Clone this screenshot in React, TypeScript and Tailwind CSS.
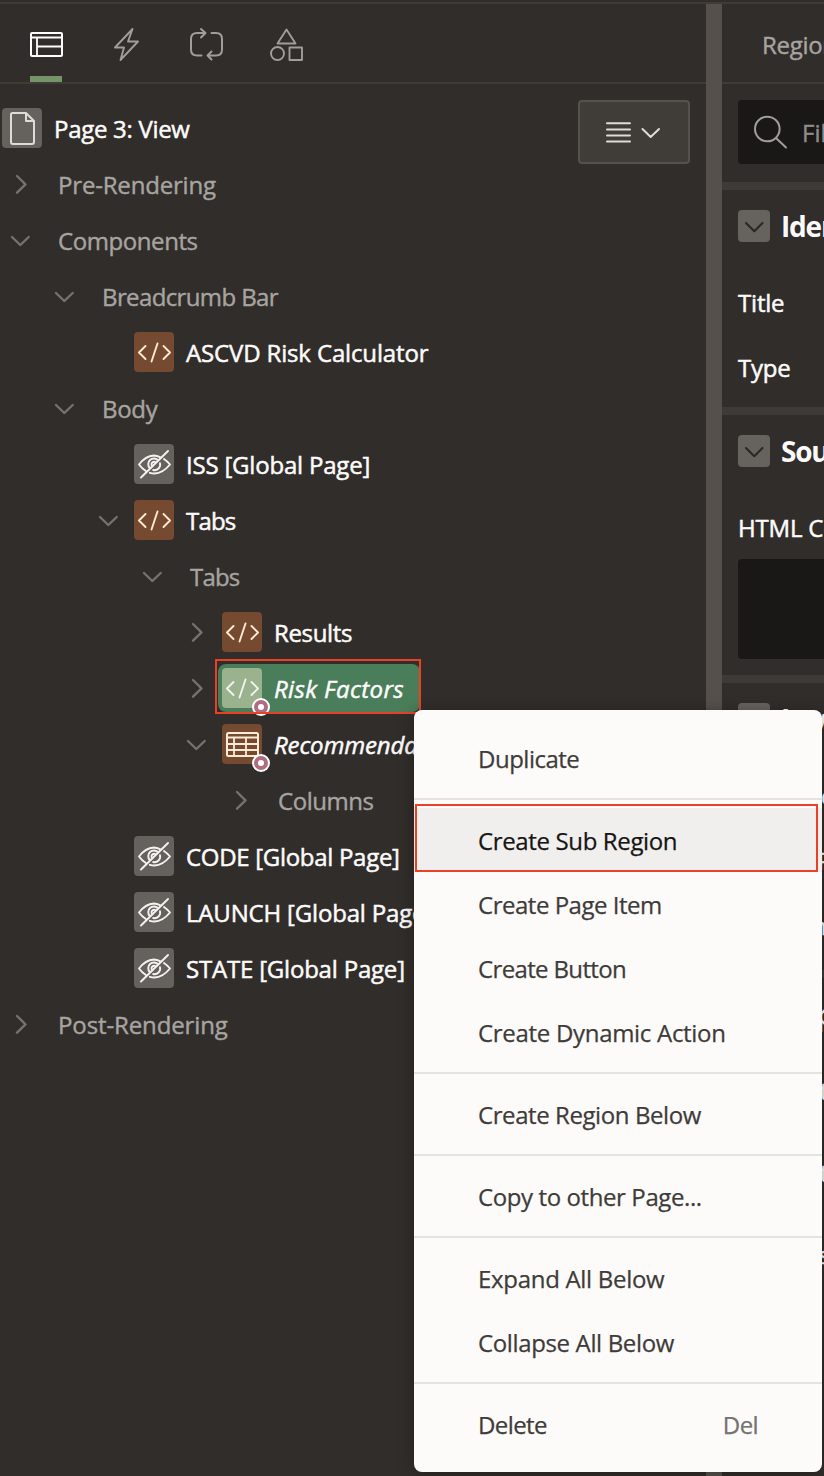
import React from "react";

type IconKind = "page" | "code" | "codeSel" | "hidden" | "table";

interface Node {
  label: string;
  pad: string;
  open?: boolean;
  icon?: IconKind;
  italic?: boolean;
  selected?: boolean;
  tracking: string;
}

const nodes: Node[] = [
  { label: "Pre-Rendering", pad: "pl-0", open: false, tracking: "tracking-[-0.18px]" },
  { label: "Components", pad: "pl-0", open: true, tracking: "tracking-[-0.42px]" },
  { label: "Breadcrumb Bar", pad: "pl-[44px]", open: true, tracking: "tracking-[-0.62px]" },
  { label: "ASCVD Risk Calculator", pad: "pl-[88px]", icon: "code", tracking: "tracking-[-0.15px]" },
  { label: "Body", pad: "pl-[44px]", open: true, tracking: "tracking-[-0.3px]" },
  { label: "ISS [Global Page]", pad: "pl-[88px]", icon: "hidden", tracking: "tracking-[-0.2px]" },
  { label: "Tabs", pad: "pl-[88px]", open: true, icon: "code", tracking: "tracking-[-0.8px]" },
  { label: "Tabs", pad: "pl-[132px]", open: true, tracking: "tracking-[-0.8px]" },
  { label: "Results", pad: "pl-[176px]", open: false, icon: "code", tracking: "tracking-[-0.35px]" },
  { label: "Risk Factors", pad: "pl-[176px]", open: false, icon: "codeSel", italic: true, selected: true, tracking: "tracking-[0.4px]" },
  { label: "Recommendations", pad: "pl-[176px]", open: true, icon: "table", italic: true, tracking: "tracking-[-0.15px]" },
  { label: "Columns", pad: "pl-[220px]", open: false, tracking: "tracking-[-0.45px]" },
  { label: "CODE [Global Page]", pad: "pl-[88px]", icon: "hidden", tracking: "tracking-[-0.3px]" },
  { label: "LAUNCH [Global Page]", pad: "pl-[88px]", icon: "hidden", tracking: "tracking-[-0.18px]" },
  { label: "STATE [Global Page]", pad: "pl-[88px]", icon: "hidden", tracking: "tracking-[-0.2px]" },
  { label: "Post-Rendering", pad: "pl-0", open: false, tracking: "tracking-[-0.12px]" },
];

function NodeIcon({ kind }: { kind: IconKind }) {
  const bg =
    kind === "code" || kind === "table" ? "bg-[#754a30]" : kind === "codeSel" ? "bg-[#9ab28d]" : "bg-[#65615d]";
  const color = kind === "code" || kind === "table" ? "text-[#fcecd4]" : "text-[#f4f2f0]";
  return (
    <div className={`relative size-10 shrink-0 rounded-[4px] ${bg} ${color}`}>
      <svg viewBox="0 0 40 40" className="size-10" fill="none" stroke="currentColor" strokeWidth="2" strokeLinecap="round" strokeLinejoin="round">
        {kind === "page" && (
          <path stroke="#dedbd8" d="M10.500 5H24L32 13V34Q32 36 30 36H11Q9 36 9 34V6.500Q9 5 10.500 5ZM24 5V13H32" />
        )}
        {(kind === "code" || kind === "codeSel") && (
          <path strokeWidth="1.9" d="M11.500 14L5 20.500L11.500 27M29.500 14L36 20.500L29.500 27M23.500 11.500L17.500 29.500" />
        )}
        {kind === "hidden" && (
          <>
            <path strokeWidth="1.9" d="M26 13.200Q23 11.500 19.800 11.500Q11.500 12 5 20.500Q8 24.500 11.500 26.800M30 15Q33.500 17.400 36 20.500Q28.500 29.500 20.500 29.500Q18 29.500 15.800 28.800M34 7L7 33.500" />
            <path strokeWidth="1.9" d="M24 16.200A5.600 5.600 0 0 0 15.800 24M26 19.200A5.600 5.600 0 0 1 19.200 26M21.600 18.200A2.600 2.600 0 0 0 18 21.800" />
          </>
        )}
        {kind === "table" && (
          <>
            <rect x="5" y="9" width="31" height="23" rx="1.500" />
            <path strokeWidth="1.800" strokeLinecap="butt" d="M5 13.500H36M5 20H36M5 26H36M12 13.500V32M24 13.500V32" />
          </>
        )}
      </svg>
      {(kind === "codeSel" || kind === "table") && (
        <svg viewBox="0 0 18 18" className="absolute top-[30px] left-[30px] size-[18px]">
          <circle cx="9" cy="9" r="9" fill="#fff" />
          <circle cx="9" cy="9" r="7" fill="#b06c80" />
          <circle cx="9" cy="9" r="3" fill="#fff" />
        </svg>
      )}
    </div>
  );
}

function Chevron({ open }: { open: boolean }) {
  return (
    <svg viewBox="0 0 46 40" className="h-10 w-[46px]" fill="none" stroke="#76726e" strokeWidth="2.400" strokeLinecap="round" strokeLinejoin="round">
      <path d={open ? "M12 17L20.300 25L28.700 17" : "M17 12L25.500 20.300L17 28.700"} />
    </svg>
  );
}

function TreeRow({ node }: { node: Node }) {
  return (
    <div className={`flex h-14 items-center ${node.pad}`}>
      <div className="w-[46px] shrink-0">{node.open !== undefined && <Chevron open={node.open} />}</div>
      <div
        className={`flex h-12 items-center whitespace-nowrap ${node.selected ? "-ml-1 w-[202px] rounded-[8px] bg-[#4a7d59] pl-1" : ""}`}
      >
        {node.icon && <NodeIcon kind={node.icon} />}
        <span
          className={`ml-3 pt-[2px] leading-8 ${node.tracking} ${node.icon ? "text-[#fcfbfa] [-webkit-text-stroke:0.5px]" : "text-[#a7a4a1] [-webkit-text-stroke:0.4px]"} ${node.italic ? "italic" : ""}`}
        >
          {node.label}
        </span>
      </div>
    </div>
  );
}

function Tabs() {
  return (
    <div className="flex h-[80px] shrink-0 border-b-2 border-[#3f3b37] pl-[30px]">
      <svg viewBox="0 0 280 78" className="h-[78px] w-[280px]" fill="none" stroke="#a09d9a" strokeWidth="2" strokeLinecap="round" strokeLinejoin="round">
        <g stroke="#fff">
          <rect x="1" y="29" width="31" height="23" rx="1" />
          <path strokeWidth="1.800" d="M1 33.500H32M7 33.500V52M7 42.500H32" />
        </g>
        <rect x="0" y="72" width="32" height="6" fill="#759569" stroke="none" />
        <path strokeWidth="1.900" d="M102.500 25L85 43.500H94L90.500 56L108 37.500H98Z" />
        <path d="M171.500 51.500H167Q161 51.500 161 45.500V35Q161 29 167 29H175M171 25L175.500 29L171 33.500M181.500 29H186Q192 29 192 35V45.500Q192 51.500 186 51.500H178M181.500 47.500L177.500 51.500L181.500 55.500" />
        <path strokeWidth="1.900" d="M256.500 25.500L265.500 39.500H247.500Z" />
        <circle cx="247.500" cy="49.500" r="6.500" strokeWidth="1.900" />
        <rect x="259.500" y="43.500" width="12.500" height="12.500" strokeWidth="1.900" />
      </svg>
    </div>
  );
}

function SectionTitle({ children }: { children: React.ReactNode }) {
  return (
    <div className="flex h-[60px] gap-3 border-t-8 border-[#3e3a37] px-4 pt-[20px]">
      <div className="size-8 shrink-0 rounded-[4px] bg-[#66625e]">
        <svg viewBox="0 0 32 32" className="size-8" fill="none" stroke="#292623" strokeWidth="2" strokeLinecap="round" strokeLinejoin="round">
          <path d="M8 13L16.300 21.300L24.500 13" />
        </svg>
      </div>
      <h2 className="-ml-px text-[28px] leading-8 font-bold tracking-[-1.200px] text-[#fcfbfa]">{children}</h2>
    </div>
  );
}

interface MenuItem {
  label: string;
  tracking: string;
  hint?: string;
  active?: boolean;
}

const menu: MenuItem[][] = [
  [{ label: "Duplicate", tracking: "tracking-[-0.5px]" }],
  [
    { label: "Create Sub Region", active: true, tracking: "tracking-[-0.36px]" },
    { label: "Create Page Item", tracking: "tracking-[-0.48px]" },
    { label: "Create Button", tracking: "tracking-[-0.65px]" },
    { label: "Create Dynamic Action", tracking: "tracking-[-0.3px]" },
  ],
  [{ label: "Create Region Below", tracking: "tracking-[-0.42px]" }],
  [{ label: "Copy to other Page...", tracking: "tracking-[-0.4px]" }],
  [
    { label: "Expand All Below", tracking: "tracking-[-0.3px]" },
    { label: "Collapse All Below", tracking: "tracking-[-0.36px]" },
  ],
  [{ label: "Delete", hint: "Del", tracking: "tracking-[-0.6px]" }],
];

function ContextMenu() {
  return (
    <div className="absolute top-[710px] left-[414px] w-[408px] rounded-[8px] bg-[#fcfbfa] py-4 text-[#3e3b39] shadow-[0_2px_16px_rgba(0,0,0,0.3)]">
      {menu.map((group, i) => (
        <div key={i} className={i > 0 ? "mt-2 border-t-2 border-[#e4e3e1] pt-2" : ""}>
          {group.map((item) => (
            <div
              key={item.label}
              className={`flex h-16 items-center justify-between px-16 pt-px [-webkit-text-stroke:0.25px] ${item.tracking} ${item.active ? "bg-[#f0efed] text-[#161513]" : ""}`}
            >
              <span>{item.label}</span>
              {item.hint && <span className="text-[#75726f]">{item.hint}</span>}
            </div>
          ))}
        </div>
      ))}
      <div className="absolute top-[94px] left-px h-[68px] w-[403px] border-2 border-[#ea4025]" />
    </div>
  );
}

const propertyLabel = "pl-4 leading-9 whitespace-nowrap tracking-[-0.2px] [-webkit-text-stroke:0.5px]";

export default function App() {
  return (
    <div className="relative flex h-[1476px] w-[824px] flex-col overflow-hidden bg-[#312d2a] font-['Open_Sans','Noto_Sans',sans-serif] text-[24px]">
      <div className="mt-[2px] h-[2px] shrink-0 bg-[#3f3b37]" />
      <div className="flex min-h-0 flex-1">
        <aside className="flex w-[706px] shrink-0 flex-col">
          <Tabs />
          <div className="flex items-start justify-between pt-4 pr-4">
            <div className="min-w-0">
              <div className="flex h-14 items-center pl-[2px]">
                <NodeIcon kind="page" />
                <span className="ml-3 pt-[2px] leading-8 tracking-[-0.300px] text-[#fcfbfa] [-webkit-text-stroke:0.5px]">Page 3: View</span>
              </div>
              {nodes.map((n, i) => (
                <TreeRow key={i} node={n} />
              ))}
            </div>
            <button className="flex h-16 w-28 shrink-0 items-center justify-center rounded-[4px] border-2 border-[#55514d] bg-[#403c37]">
              <svg viewBox="0 0 108 60" className="h-[60px] w-[108px]" fill="none" stroke="#dedbd8" strokeWidth="2" strokeLinecap="round" strokeLinejoin="round">
                <path d="M27 21.300H50M27 27.400H50M27 33.500H50M27 39.600H50M62.500 27L70.700 35L79 27" />
              </svg>
            </button>
          </div>
        </aside>
        <div className="w-4 shrink-0 bg-[#55504b]" />
        <section className="w-[340px] shrink-0 text-[#fcfbfa]">
          <div className="flex h-[80px] items-center border-b-2 border-[#3f3b37] pt-[3px] pl-10 tracking-[-0.300px] text-[#a7a4a1] [-webkit-text-stroke:0.4px]">Region</div>
          <div className="px-4 pt-4 pb-[18px]">
            <div className="flex h-16 items-center rounded-[4px] bg-[#191816] pl-4 text-[#8f8c89]">
              <svg viewBox="0 0 34 34" className="size-[34px]" fill="none" stroke="#a09d9a" strokeWidth="2" strokeLinecap="round">
                <circle cx="13.300" cy="14" r="12.300" />
                <path d="M22 23L32 32.500" />
              </svg>
              <span className="ml-[14px] pt-px whitespace-nowrap [-webkit-text-stroke:0.4px]">Filter Properties</span>
            </div>
          </div>
          <div className="h-[225px]">
            <SectionTitle>Identification</SectionTitle>
            <div className={`mt-[43px] h-[65px] ${propertyLabel}`}>Title</div>
            <div className={propertyLabel}>Type</div>
          </div>
          <div className="h-[268px]">
            <SectionTitle>Source</SectionTitle>
            <div className={`mt-[43px] ${propertyLabel}`}>HTML Code</div>
            <div className="mt-[13px] ml-4 h-[100px] rounded-[4px] bg-[#191816]" />
          </div>
          <div className="h-[295px]">
            <SectionTitle>Layout</SectionTitle>
            <div className={`mt-[43px] h-[65px] ${propertyLabel}`}>Sequence</div>
            <div className={`h-[65px] ${propertyLabel}`}>Parent Region</div>
            <div className={propertyLabel}>Position</div>
          </div>
          <div>
            <SectionTitle>Appearance</SectionTitle>
            <div className={`mt-[43px] h-[82px] ${propertyLabel}`}>Template</div>
            <div className={`h-[82px] ${propertyLabel}`}>Template Options</div>
            <div className={propertyLabel}>CSS Classes</div>
          </div>
        </section>
      </div>
      <div className="absolute top-[659px] left-[215px] h-[55px] w-[206px] border-2 border-[#ea4025]" />
      <ContextMenu />
    </div>
  );
}
